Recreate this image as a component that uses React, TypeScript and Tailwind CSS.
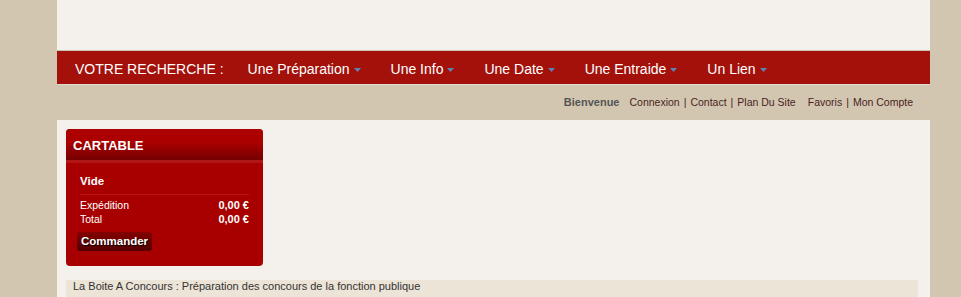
const navItems = ["Une Préparation", "Une Info", "Une Date", "Une Entraide", "Un Lien"];

function Caret() {
  return (
    <svg width="7" height="4" viewBox="0 0 7 4" className="ml-[4px] mt-[2px]">
      <path d="M0 0h7L3.5 4z" fill="#5b84b3" />
    </svg>
  );
}

export default function App() {
  return (
    <div className="min-h-[297px] bg-[#d2c6b0] font-['Liberation_Sans',Arial,sans-serif]">
      <div className="ml-[57px] w-[873px]">
        <div className="h-[50px] bg-[#f4f1ec]" />
        <nav className="h-[35px] border-t border-b border-t-[#c8c3bd] border-b-[#dedad4] bg-[#a3110a] flex items-center pt-[3px] pl-[18px] text-white text-[14px]">
          <span className="mr-[24px]">VOTRE RECHERCHE :</span>
          {navItems.map((item) => (
            <div key={item} className="flex items-center mr-[30px]">
              <span>{item}</span>
              <Caret />
            </div>
          ))}
        </nav>
        <div className="h-[35px] flex items-center justify-end pr-[17px] text-[10.5px] text-[#4b1e1e]">
          <span className="font-bold text-[11px] text-[#555] mr-[10px]">Bienvenue</span>
          <span>Connexion</span>
          <span className="mx-[4px]">|</span>
          <span>Contact</span>
          <span className="mx-[4px]">|</span>
          <span>Plan Du Site</span>
          <span className="ml-[12px]">Favoris</span>
          <span className="mx-[4px]">|</span>
          <span>Mon Compte</span>
        </div>
        <div className="bg-[#f4f1ec] pt-[9px] pl-[9px] pr-[12px] min-h-[177px]">
          <div className="w-[197px] h-[137px] rounded-[4px] overflow-hidden bg-[#a80000]">
            <div className="h-[34px] flex items-center pt-[3px] px-[7px] bg-gradient-to-b from-[#ac0000] from-40% to-[#760000] border-b-[3px] border-b-[#b01616] text-white font-bold text-[13px]">
              CARTABLE
            </div>
            <div className="px-[14px] pt-[10px] text-white text-[10.5px]">
              <div className="font-bold text-[11.5px] pb-[4px] border-b border-b-[#bb1414]">Vide</div>
              <div className="flex justify-between mt-[3px] leading-[14px]">
                <span>Expédition</span>
                <span className="font-bold text-[11px]">0,00 €</span>
              </div>
              <div className="flex justify-between leading-[14px]">
                <span>Total</span>
                <span className="font-bold text-[11px]">0,00 €</span>
              </div>
              <button className="mt-[6px] -ml-[3px] h-[19px] px-[4px] rounded-[3px] bg-gradient-to-b from-[#840000] to-[#520000] text-white font-bold text-[11.5px] [text-shadow:1px_1px_1px_#000]">
                Commander
              </button>
            </div>
          </div>
          <div className="mt-[14px] h-[20px] bg-[#ece4d7] pl-[7px] leading-[13px] text-[11px] text-[#333]">
            La Boite A Concours : Préparation des concours de la fonction publique
          </div>
        </div>
      </div>
    </div>
  );
}
